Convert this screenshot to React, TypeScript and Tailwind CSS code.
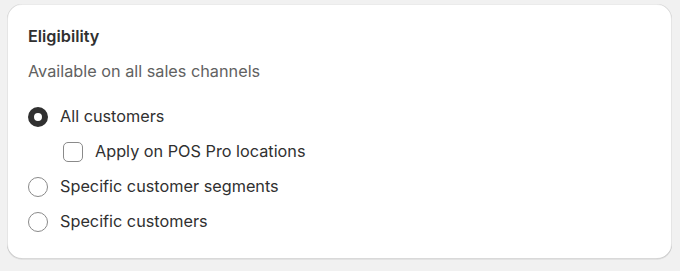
import React from "react";

function Radio({ checked, label }: { checked?: boolean; label: string }) {
  return (
    <label className="flex h-[25px] items-center gap-[12px]">
      {checked ? (
        <span className="box-border h-[20px] w-[20px] shrink-0 rounded-full border-[6px] border-[#303030] bg-white" />
      ) : (
        <span className="box-border h-[20px] w-[20px] shrink-0 rounded-full border border-[#8a8a8a] bg-white" />
      )}
      <span>{label}</span>
    </label>
  );
}

export default function App() {
  return (
    <div
      className="h-[271px] w-[680px] bg-[#f1f1f1] pl-[7px] pr-[8px] pt-[4px] text-[16.25px] leading-[25px] text-[#303030]"
      style={{ fontFamily: "Inter, 'Noto Sans', sans-serif" }}
    >
      <div className="h-[255px] w-[665px] rounded-[15px] bg-white pl-[21px] pr-[20px] pt-[20px] shadow-[0_1px_0_0_rgba(26,26,26,0.07),inset_1px_0_0_0_rgba(0,0,0,0.1),inset_-1px_0_0_0_rgba(0,0,0,0.1),inset_0_-1px_0_0_rgba(0,0,0,0.15),inset_0_1px_0_0_rgba(204,204,204,0.4)]">
        <div className="flex flex-col">
          <h2 className="font-semibold">Eligibility</h2>
          <p className="mt-[10px] text-[#616161]">Available on all sales channels</p>
          <div className="mt-[20px] flex flex-col gap-[10px]">
            <Radio checked label="All customers" />
            <label className="ml-[35px] flex h-[25px] items-center gap-[12px]">
              <span className="box-border h-[20px] w-[20px] shrink-0 rounded-[5px] border border-[#8a8a8a] bg-white" />
              <span>Apply on POS Pro locations</span>
            </label>
            <Radio label="Specific customer segments" />
            <Radio label="Specific customers" />
          </div>
        </div>
      </div>
    </div>
  );
}
